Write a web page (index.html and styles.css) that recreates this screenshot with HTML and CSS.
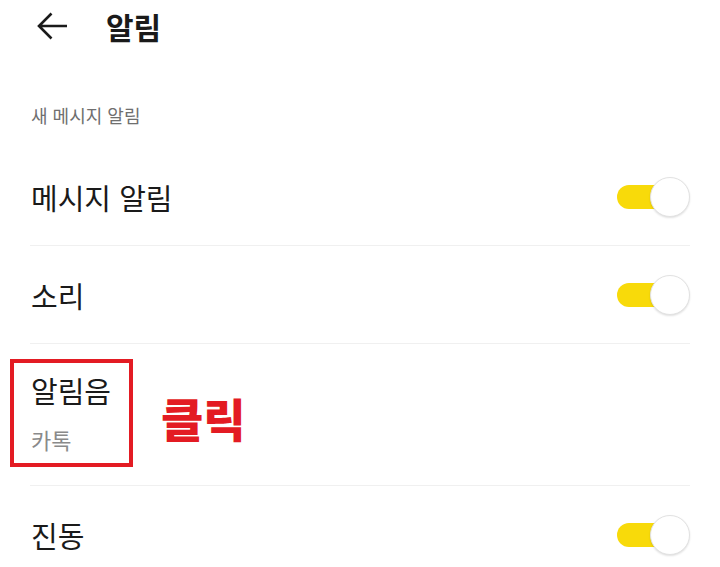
FILE: index.html
```html
<!DOCTYPE html>
<html lang="ko">
<head>
<meta charset="utf-8">
<title>알림</title>
<link rel="stylesheet" href="styles.css">
</head>
<body>
<div class="page">
  <header class="topbar">
    <svg class="back" width="32" height="30" viewBox="0 0 32 30" aria-hidden="true">
      <path d="M31 15 H3 M15.5 2.5 L3 15 L15.5 27.5" fill="none" stroke="#1a1a1a" stroke-width="2.6" stroke-linecap="butt" stroke-linejoin="miter"/>
    </svg>
    <h1 class="title">알림</h1>
  </header>

  <div class="section-label">새 메시지 알림</div>

  <ul class="list">
    <li class="row">
      <span class="label">메시지 알림</span>
      <span class="toggle"><span class="track"></span><span class="knob"></span></span>
    </li>
    <li class="row">
      <span class="label">소리</span>
      <span class="toggle"><span class="track"></span><span class="knob"></span></span>
    </li>
    <li class="row row-two">
      <div class="stack">
        <span class="label">알림음</span>
        <span class="sub">카톡</span>
      </div>
      <span class="mark-box"></span>
      <span class="mark-text">클릭</span>
    </li>
    <li class="row">
      <span class="label">진동</span>
      <span class="toggle"><span class="track"></span><span class="knob"></span></span>
    </li>
  </ul>
</div>
</body>
</html>
```

FILE: styles.css
```css
* { box-sizing: border-box; }
html, body {
  margin: 0;
  padding: 0;
  background: #ffffff;
}
body {
  font-family: "Noto Sans CJK KR", "Noto Sans", sans-serif;
  color: #1a1a1a;
  width: 720px;
  height: 567px;
  overflow: hidden;
}
.page { width: 720px; }

.topbar {
  height: 52px;
  display: flex;
  align-items: center;
  padding-left: 36px;
}
.back { display: block; flex: none; }
.title {
  margin: 0 0 0 38px;
  font-size: 30px;
  font-weight: 700;
  line-height: 40px;
  color: #1a1a1a;
}

.section-label {
  padding: 48px 0 18px 31px;
  font-size: 18px;
  line-height: 30px;
  color: #6f6f6f;
}

.list {
  list-style: none;
  margin: 0 30px;
  padding: 0;
}
.row {
  position: relative;
  height: 98px;
  display: flex;
  align-items: center;
  justify-content: space-between;
  padding-left: 1px;
  border-bottom: 1px solid #f0f0f0;
}
.row:last-child { border-bottom: none; }
.label {
  font-size: 29px;
  line-height: 40px;
  color: #1a1a1a;
}
.row-two {
  height: 142px;
  align-items: flex-start;
  padding-top: 26px;
}
.stack {
  display: flex;
  flex-direction: column;
  gap: 14px;
}
.sub {
  font-size: 22px;
  line-height: 30px;
  color: #8a8a8a;
}

.toggle {
  position: relative;
  width: 73px;
  height: 40px;
  flex: none;
}
.track {
  position: absolute;
  left: 0;
  top: 8px;
  width: 56px;
  height: 24px;
  border-radius: 12px;
  background: #f8da0a;
}
.knob {
  position: absolute;
  right: 0;
  top: 0;
  width: 40px;
  height: 40px;
  border-radius: 50%;
  background: #ffffff;
  border: 1px solid #e2e2e2;
  box-shadow: 0 1px 2px rgba(0,0,0,0.12);
}

.mark-box {
  position: absolute;
  left: -20px;
  top: 15px;
  width: 123px;
  height: 108px;
  border: 4px solid #e31b23;
}
.mark-text {
  position: absolute;
  left: 131px;
  top: 44px;
  font-size: 46px;
  line-height: 58px;
  font-weight: 900;
  color: #e31b23;
}
```
